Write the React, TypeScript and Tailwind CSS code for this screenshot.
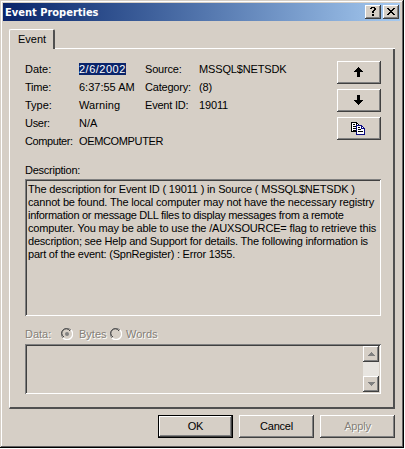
import type { ReactNode } from 'react';

const raised =
  'shadow-[inset_-1px_-1px_0_#404040,inset_1px_1px_0_#ffffff,inset_-2px_-2px_0_#808080]';
const sunken =
  'shadow-[inset_1px_1px_0_#808080,inset_-1px_-1px_0_#ffffff,inset_2px_2px_0_#404040]';

function Pixels({ rows, fill }: { rows: string[]; fill: string }) {
  const cells: ReactNode[] = [];
  rows.forEach((row, y) =>
    row.split('').forEach((c, x) => {
      if (c === '.') return;
      const color = c === 'b' ? '#0a0a80' : c === 'w' ? '#ffffff' : fill;
      cells.push(<rect key={`${x}-${y}`} x={x} y={y} width="1" height="1" fill={color} />);
    })
  );
  return (
    <svg width={rows[0].length} height={rows.length} shapeRendering="crispEdges" className="block shrink-0">
      {cells}
    </svg>
  );
}

const HELP = ['.####.', '##..##', '....##', '...##.', '..##..', '..##..', '......', '..##..', '..##..'];
const CLOSE = ['##....##', '.##..##.', '..####..', '...##...', '..####..', '.##..##.', '##....##'];
const UP = ['....#....', '...###...', '..#####..', '.#######.', '#########', '...###...', '...###...', '...###...', '...###...', '...###...'];
const DOWN = [...UP].reverse();
const COPY = [
  '######.........',
  '#wwww##........',
  '#w##w#w#.......',
  '#wwwwbbbbbb....',
  '#w###bwwwwbb...',
  '#wwwwbw##wbwb..',
  '#w###bwwwwbbbb.',
  '#wwwwbw###wwwb.',
  '#w###bwwwwwwwb.',
  '######w#####wb.',
  '.....bwwwwwwwb.',
  '.....bwwwwwwwb.',
  '.....bbbbbbbbb.',
];
const TRI_UP = ['...#...', '..###..', '.#####.', '#######'];
const TRI_DOWN = ['#######', '.#####.', '..###..', '...#...'];

function Radio({ on }: { on?: boolean }) {
  return (
    <svg width="12" height="12" viewBox="0 0 12 12" className="block shrink-0">
      <path d="M10 2A5.5 5.5 0 1 0 2 10" fill="none" stroke="#808080" />
      <path d="M2 10A5.5 5.5 0 0 0 10 2" fill="none" stroke="#fff" strokeWidth="1.3" />
      <path d="M9 3A4.4 4.4 0 1 0 3 9" fill="none" stroke="#404040" />
      {on && <circle cx="6" cy="6" r="2" fill="#808080" />}
    </svg>
  );
}

const fields = [
  ['Date:', '', '2/6/2002', 'tracking-[0.5px]', 'Source:', 'MSSQL$NETSDK'],
  ['Time:', 'tracking-[-0.2px]', '6:37:55 AM', '', 'Category:', '(8)'],
  ['Type:', '', 'Warning', 'tracking-[0.1px]', 'Event ID:', '19011'],
  ['User:', 'tracking-[-0.3px]', 'N/A', '', '', ''],
  ['Computer:', 'tracking-[-0.4px]', 'OEMCOMPUTER', 'tracking-[-0.35px]', '', ''],
];

const description = [
  ['The description for Event ID ( 19011 ) in Source ( MSSQL$NETSDK )', 'tracking-[-0.17px]'],
  ['cannot be found. The local computer may not have the necessary registry', 'tracking-[-0.17px]'],
  ['information or message DLL files to display messages from a remote', 'tracking-[-0.29px]'],
  ['computer. You may be able to use the /AUXSOURCE= flag to retrieve this', 'tracking-[-0.16px]'],
  ['description; see Help and Support for details. The following information is', 'tracking-[-0.21px]'],
  ['part of the event: (SpnRegister) : Error 1355.', 'tracking-[-0.23px]'],
];

export default function App() {
  return (
    <div className="h-[449px] w-[405px] overflow-hidden bg-white font-['Liberation_Sans',sans-serif] text-[11px] leading-[13px] text-black">
      <div className="flex h-[448px] w-[404px] flex-col bg-[#d6cfc6] p-[3px] shadow-[inset_-1px_-1px_0_#000000,inset_1px_1px_0_#d6cfc6,inset_-2px_-2px_0_#606060,inset_2px_2px_0_#ffffff]">
        <div className="flex h-[18px] w-[397px] shrink-0 items-center bg-linear-to-r from-[#0a246a] to-[#a6caf0] pr-px pl-[2px]">
          <span className="grow font-['DejaVu_Sans_Condensed','DejaVu_Sans',sans-serif] text-[11px] font-bold whitespace-nowrap text-white">
            Event Properties
          </span>
          <button className={`mr-[2px] flex h-[14px] w-[16px] items-center justify-center bg-[#d6cfc6] pb-px ${raised}`}>
            <Pixels rows={HELP} fill="#000" />
          </button>
          <button className={`flex h-[14px] w-[16px] items-center justify-center bg-[#d6cfc6] pb-px ${raised}`}>
            <Pixels rows={CLOSE} fill="#000" />
          </button>
        </div>

        <div className="mt-[8px] ml-[6px] flex h-[20px] shrink-0">
          <div className="flex w-[46px] rounded-t-[2px] border-t border-r-2 border-l border-t-white border-r-[#505050] border-l-white pt-[3px] pl-[8px]">
            Event
          </div>
          <div className="w-[340px] border-b border-white" />
        </div>

        <div className="ml-[6px] flex h-[360px] w-[386px] shrink-0 flex-col border-r-2 border-b-2 border-l border-r-[#505050] border-b-[#505050] border-l-white pl-[15px]">
          <div className="flex h-[114px] pt-[12px]">
            <div className="w-[312px] pt-[2px]">
              {fields.map(([a, at, b, bt, c, d], i) => (
                <div key={a} className="flex h-[18px] whitespace-nowrap">
                  <span className={`w-[54px] ${at}`}>{a}</span>
                  <span className={`w-[66px] ${bt}`}>
                    <span className={i === 0 ? 'bg-[#0a246a] text-white' : ''}>{b}</span>
                  </span>
                  <span className="w-[54px] tracking-[-0.2px]">{c}</span>
                  <span className="tracking-[-0.15px]">{d}</span>
                </div>
              ))}
            </div>
            <div className="flex flex-col gap-[5px]">
              {[UP, DOWN, COPY].map((icon, i) => (
                <button key={i} className={`flex h-[23px] w-[44px] items-center justify-center pr-px pb-px ${raised}`}>
                  <Pixels rows={icon} fill="#000" />
                </button>
              ))}
            </div>
          </div>
          <div className="h-[16px] pt-px tracking-[-0.25px]">Description:</div>
          <div className={`h-[137px] w-[356px] pt-[4px] pl-[3px] whitespace-nowrap ${sunken}`}>
            {description.map(([line, t]) => (
              <div key={line}>
                <span className={t}>{line}</span>
              </div>
            ))}
          </div>
          <div className="flex h-[28px] items-center pt-[8px] text-[#858078] [text-shadow:1px_1px_0_#ffffff]">
            <span className="w-[36px] pt-px">Data:</span>
            <Radio on />
            <span className="ml-[6px] w-[31px] pt-px">Bytes</span>
            <Radio />
            <span className="ml-[4px] pt-px">Words</span>
          </div>
          <div className={`flex h-[50px] w-[356px] justify-end p-[2px] ${sunken}`}>
            <div className="flex w-[16px] flex-col justify-between bg-[#e8e5e0]">
              <div className={`flex h-[16px] items-center justify-center bg-[#d6cfc6] ${raised}`}>
                <Pixels rows={TRI_UP} fill="#808080" />
              </div>
              <div className={`flex h-[16px] items-center justify-center bg-[#d6cfc6] ${raised}`}>
                <Pixels rows={TRI_DOWN} fill="#808080" />
              </div>
            </div>
          </div>
        </div>

        <div className="mt-[6px] ml-[155px] flex h-[23px] gap-[6px] tracking-[-0.2px]">
          <button className="h-[23px] w-[75px] border border-black pb-px shadow-[inset_-1px_-1px_0_#404040,inset_1px_1px_0_#ffffff,inset_-2px_-2px_0_#808080]">
            OK
          </button>
          <button className={`h-[23px] w-[75px] pb-px ${raised}`}>Cancel</button>
          <button className={`h-[23px] w-[75px] pb-px text-[#858078] [text-shadow:1px_1px_0_#ffffff] ${raised}`}>
            Apply
          </button>
        </div>
      </div>
    </div>
  );
}
